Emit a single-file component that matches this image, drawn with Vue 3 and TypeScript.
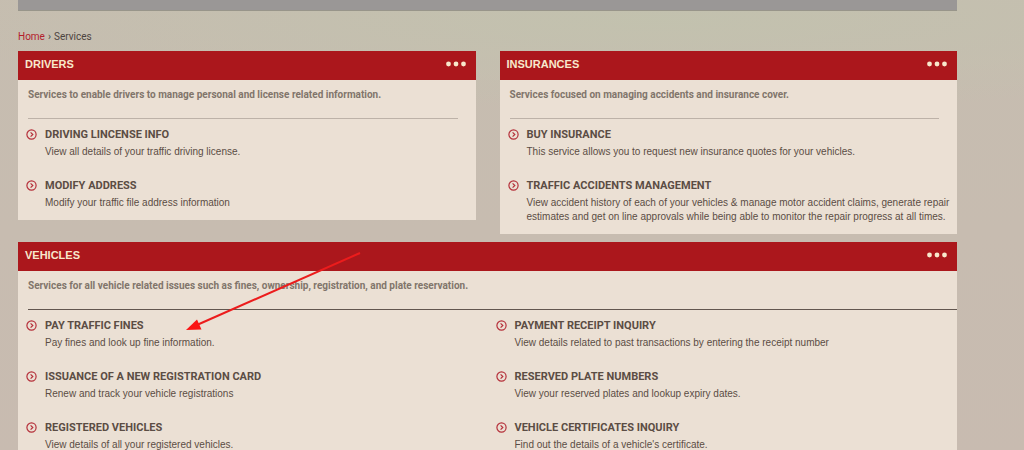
<script setup lang="ts">
interface Service {
  title: string
  text: string
}
interface Panel {
  id: string
  title: string
  intro: string
  wide: boolean
  services: Service[]
}

const panels: Panel[] = [
  {
    id: 'drivers',
    title: 'DRIVERS',
    intro: 'Services to enable drivers to manage personal and license related information.',
    wide: false,
    services: [
      { title: 'DRIVING LINCENSE INFO', text: 'View all details of your traffic driving license.' },
      { title: 'MODIFY ADDRESS', text: 'Modify your traffic file address information' },
    ],
  },
  {
    id: 'insurances',
    title: 'INSURANCES',
    intro: 'Services focused on managing accidents and insurance cover.',
    wide: false,
    services: [
      { title: 'BUY INSURANCE', text: 'This service allows you to request new insurance quotes for your vehicles.' },
      {
        title: 'TRAFFIC ACCIDENTS MANAGEMENT',
        text: 'View accident history of each of your vehicles & manage motor accident claims, generate repair estimates and get on line approvals while being able to monitor the repair progress at all times.',
      },
    ],
  },
  {
    id: 'vehicles',
    title: 'VEHICLES',
    intro: 'Services for all vehicle related issues such as fines, ownership, registration, and plate reservation.',
    wide: true,
    services: [
      { title: 'PAY TRAFFIC FINES', text: 'Pay fines and look up fine information.' },
      { title: 'PAYMENT RECEIPT INQUIRY', text: 'View details related to past transactions by entering the receipt number' },
      { title: 'ISSUANCE OF A NEW REGISTRATION CARD', text: 'Renew and track your vehicle registrations' },
      { title: 'RESERVED PLATE NUMBERS', text: 'View your reserved plates and lookup expiry dates.' },
      { title: 'REGISTERED VEHICLES', text: 'View details of all your registered vehicles.' },
      { title: 'VEHICLE CERTIFICATES INQUIRY', text: "Find out the details of a vehicle's certificate." },
    ],
  },
]
</script>

<template>
  <div class="page">
    <div class="banner"></div>
    <nav class="crumbs" aria-label="Breadcrumb">
      <a href="#">Home</a>
      <span class="sep">›</span>
      <span>Services</span>
    </nav>
    <main class="panels">
      <section v-for="p in panels" :key="p.id" class="panel" :class="{ wide: p.wide }">
        <header class="bar">
          <h2>{{ p.title }}</h2>
          <button type="button" class="more" :aria-label="'More ' + p.title">
            <svg width="20" height="6" viewBox="0 0 20 6" aria-hidden="true">
              <circle cx="2.5" cy="3" r="2.4" />
              <circle cx="10" cy="3" r="2.4" />
              <circle cx="17.5" cy="3" r="2.4" />
            </svg>
          </button>
        </header>
        <p class="intro">{{ p.intro }}</p>
        <ul class="services">
          <li v-for="s in p.services" :key="s.title">
            <svg class="icon" width="11" height="11" viewBox="0 0 11 11" aria-hidden="true">
              <circle cx="5.5" cy="5.5" r="4.6" />
              <path d="M4.600 3.300 L6.800 5.500 L4.600 7.700" />
            </svg>
            <div>
              <a href="#">{{ s.title }}</a>
              <p>{{ s.text }}</p>
            </div>
          </li>
        </ul>
        <svg v-if="p.wide" class="arrow" width="176" height="82" viewBox="0 0 176 82" aria-hidden="true">
          <path class="shaft" d="M174 1 L12 72.500" />
          <path class="head" d="M0 78 L11 67.500 L15.500 77.500 Z" />
        </svg>
      </section>
    </main>
  </div>
</template>

<style>
html {
  min-height: 100%;
  background:
    radial-gradient(ellipse 760px 90px at 660px 20px, rgba(194, 194, 174, 0.9), rgba(194, 194, 174, 0)),
    linear-gradient(#c6bdb0, #c8bbb0);
}
</style>

<style scoped>
.page {
  padding: 0 67px 0 18px;
  font-family: "Liberation Sans", Arial, sans-serif;
  color: #5b4d44;
}
.banner {
  height: 10px;
  background: #9a9796;
  border-bottom: 1px solid #98958a;
}
.crumbs {
  display: flex;
  align-items: center;
  gap: 3px;
  height: 24px;
  padding: 14px 0 2px;
  font-family: Roboto, sans-serif;
  font-size: 10px;
  line-height: 24px;
  color: #4d443f;
}
.crumbs a {
  color: #b3202c;
  text-decoration: none;
}
.panels {
  display: grid;
  grid-template-columns: 1fr 1fr;
  column-gap: 24px;
  row-gap: 8px;
  align-items: start;
}
.panel {
  position: relative;
  background: #ebe0d4;
}
.wide {
  grid-column: 1 / -1;
}
.bar {
  display: flex;
  justify-content: space-between;
  align-items: center;
  height: 26px;
  padding: 0 10px 3px 7px;
  background: #ab171c;
}
h2 {
  margin: 0;
  font-size: 11px;
  line-height: 14px;
  color: #f8e8cc;
}
.more {
  display: flex;
  padding: 0;
  border: 0;
  background: none;
  fill: #f8e8cc;
}
.intro {
  margin: 0 18px 0 10px;
  padding: 8px 0 16px;
  border-bottom: 1px solid #bdb2a8;
  font-family: Roboto, sans-serif;
  font-size: 10px;
  font-weight: bold;
  line-height: 14px;
  color: #81756b;
}
.wide .intro {
  margin-right: 0;
  border-color: #62564f;
}
.services {
  margin: 0;
  padding: 9px 4px 10px 8px;
  list-style: none;
  display: grid;
  row-gap: 20px;
}
.wide .services {
  grid-template-columns: 1fr 1fr;
  column-gap: 8px;
  padding-right: 0;
}
li {
  display: flex;
  gap: 8px;
}
.icon {
  flex: none;
  margin-top: 1px;
  fill: none;
  stroke: #b5303a;
  stroke-width: 1.2;
}
li a {
  display: block;
  font-family: Roboto, sans-serif;
  font-size: 11px;
  font-weight: bold;
  line-height: 14px;
  color: #5b4d44;
  text-decoration: none;
}
li p {
  margin: 3px 0 0;
  font-size: 10px;
  line-height: 14px;
}
.arrow {
  position: absolute;
  left: 168px;
  top: 10px;
}
.shaft {
  fill: none;
  stroke: #ec1c1c;
  stroke-width: 2;
}
.head {
  fill: #fa1414;
}
</style>
